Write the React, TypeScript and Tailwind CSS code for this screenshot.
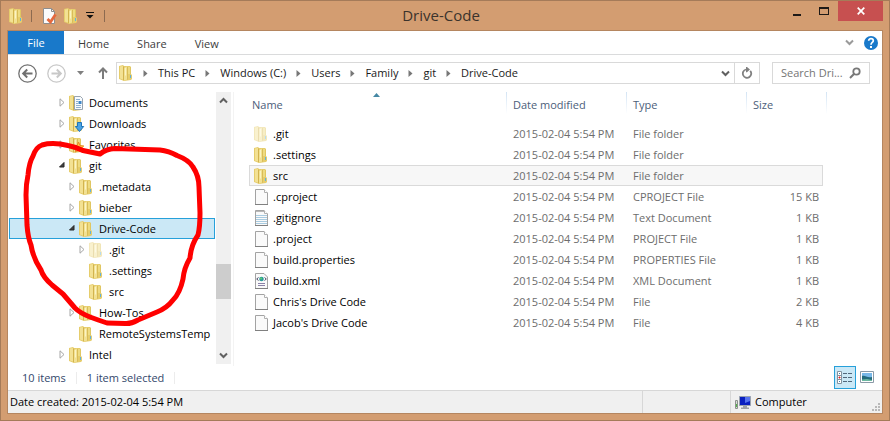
import React from "react";

type FileKind = "folder" | "hidden" | "blank" | "text" | "xml";

interface TreeNode {
  label: string;
  level: 0 | 1 | 2;
  state: "closed" | "open" | "leaf";
  icon: "folder" | "hidden" | "documents" | "downloads" | "favorites";
  selected?: boolean;
}

interface FileRow {
  name: string;
  kind: FileKind;
  type: string;
  size: string;
  hovered?: boolean;
}

const TREE: TreeNode[] = [
  { label: "Documents", level: 0, state: "closed", icon: "documents" },
  { label: "Downloads", level: 0, state: "closed", icon: "downloads" },
  { label: "Favorites", level: 0, state: "closed", icon: "favorites" },
  { label: "git", level: 0, state: "open", icon: "folder" },
  { label: ".metadata", level: 1, state: "closed", icon: "folder" },
  { label: "bieber", level: 1, state: "closed", icon: "folder" },
  { label: "Drive-Code", level: 1, state: "open", icon: "folder", selected: true },
  { label: ".git", level: 2, state: "closed", icon: "hidden" },
  { label: ".settings", level: 2, state: "leaf", icon: "folder" },
  { label: "src", level: 2, state: "leaf", icon: "folder" },
  { label: "How-Tos", level: 1, state: "closed", icon: "folder" },
  { label: "RemoteSystemsTemp", level: 1, state: "leaf", icon: "folder" },
  { label: "Intel", level: 0, state: "closed", icon: "folder" },
];

const MODIFIED = "2015-02-04 5:54 PM";

const FILES: FileRow[] = [
  { name: ".git", kind: "hidden", type: "File folder", size: "" },
  { name: ".settings", kind: "folder", type: "File folder", size: "" },
  { name: "src", kind: "folder", type: "File folder", size: "", hovered: true },
  { name: ".cproject", kind: "blank", type: "CPROJECT File", size: "15 KB" },
  { name: ".gitignore", kind: "text", type: "Text Document", size: "1 KB" },
  { name: ".project", kind: "blank", type: "PROJECT File", size: "1 KB" },
  { name: "build.properties", kind: "blank", type: "PROPERTIES File", size: "1 KB" },
  { name: "build.xml", kind: "xml", type: "XML Document", size: "1 KB" },
  { name: "Chris's Drive Code", kind: "blank", type: "File", size: "2 KB" },
  { name: "Jacob's Drive Code", kind: "blank", type: "File", size: "4 KB" },
];

const CRUMBS = ["This PC", "Windows (C:)", "Users", "Family", "git", "Drive-Code"];

const INDENT = ["pl-[50px]", "pl-[60px]", "pl-[70px]"];

function FolderIcon({ badge }: { badge?: React.ReactNode }) {
  return (
    <svg width="14" height="16" viewBox="0 0 14 16" className="shrink-0 overflow-visible" aria-hidden="true">
      <path d="M0 1 L4 0 L5 1 H11 L12 2 V9 L13 10 V14 L12 15 L5 16 L0 14 Z" fill="#e6cd6c" />
      <path d="M1 1.500 L4 1 V14.500 L1 13.500 Z" fill="#f3e193" />
      <path d="M4 1 L5 2 V15.500 L4 15 Z" fill="#d2b34e" />
      <path d="M5 3 L8 1.500 V14.500 L5 15.500 Z" fill="#f2e193" />
      <path d="M6 3 L7 2.500 V10 L6 11 Z" fill="#fbf3c4" />
      <path d="M8 2 H9 V14.500 L8 15 Z" fill="#d9bc58" />
      <path d="M9 2 H11 V9 H9 Z" fill="#eedb80" />
      <path d="M11 2 H12 V9 H11 Z" fill="#e0c662" />
      <path d="M11 10 H12 V13 H11 Z" fill="#62b1dc" />
      {badge}
    </svg>
  );
}

function TreeIcon({ icon }: { icon: TreeNode["icon"] }) {
  if (icon === "hidden") return <span className="opacity-45"><FolderIcon /></span>;
  if (icon === "documents")
    return (
      <FolderIcon
        badge={
          <g>
            <path d="M5.500 1.500 H11.500 L13.500 3.500 V14.500 H5.500 Z" fill="#f8fbfe" stroke="#98a4b0" />
            <path d="M7 4.500 H11 M7 6.500 H9 M7 8.500 H9 M7 10.500 H12 M7 12.500 H12" stroke="#8fb0d0" />
            <path d="M9.500 6 H12.500 V9 H9.500 Z" fill="#3f86c8" />
          </g>
        }
      />
    );
  if (icon === "downloads")
    return (
      <FolderIcon
        badge={<path d="M8.500 6.500 H12.500 V10.500 H14.700 L10.500 15.500 L6.300 10.500 H8.500 Z" fill="#4aa3e6" stroke="#1f74b8" />}
      />
    );
  if (icon === "favorites")
    return (
      <FolderIcon
        badge={
          <path
            d="M9.500 5 L11 8.500 L14.800 9 L12 11.500 L12.800 15 L9.500 13.200 L6.200 15 L7 11.500 L4.500 9 L8 8.500 Z"
            fill="#ffc63d"
            stroke="#e58a2b"
          />
        }
      />
    );
  return <FolderIcon />;
}

function FileIcon({ kind }: { kind: FileKind }) {
  if (kind === "folder") return <FolderIcon />;
  if (kind === "hidden") return <span className="opacity-45"><FolderIcon /></span>;
  return (
    <svg width="14" height="16" viewBox="0 0 14 16" className="shrink-0" aria-hidden="true">
      <path d="M1.500 0.500 H10 L13.500 4 V15.500 H1.500 Z" fill="#fafafa" stroke="#a3a3a3" />
      <path d="M1 15.500 H14" stroke="#808080" />
      {kind !== "xml" && <path d="M10.500 0.500 V3.500 H13.500" fill="#fff" stroke="#b0b0b0" />}
      {kind === "text" && (
        <g>
          <path d="M2.500 1.500 H10.500" stroke="#777" strokeDasharray="1 1" />
          <path d="M2 5.500 H13 M2 7.500 H13 M2 9.500 H13 M2 11.500 H13 M2 13.500 H13" stroke="#a9cbe0" />
        </g>
      )}
      {kind === "xml" && (
        <g>
          <circle cx="7.500" cy="6" r="2.300" fill="#2b9a9a" />
          <circle cx="7" cy="5.500" r="1" fill="#5ed06c" />
          <path d="M4.500 4.500 L2.700 6 L4.500 7.500 M10.500 4.500 L12.300 6 L10.500 7.500" fill="none" stroke="#4a4a68" />
          <path d="M4 10.500 H11 M4 12.500 H11" stroke="#8b82a8" />
        </g>
      )}
    </svg>
  );
}

function Expander({ state }: { state: TreeNode["state"] }) {
  return (
    <svg width="10" height="9" viewBox="0 0 10 9" className="shrink-0" aria-hidden="true">
      {state === "closed" && <path d="M1 0.800 L5 4.500 L1 8.200 Z" fill="#fff" stroke="#a6a6a6" />}
      {state === "open" && <path d="M5 1.500 V6 H0.500 Z" fill="#404040" stroke="#262626" />}
    </svg>
  );
}

function Chevron({ up, color = "#606060" }: { up?: boolean; color?: string }) {
  return (
    <svg width="9" height="7" viewBox="0 0 9 7" aria-hidden="true">
      <path d={up ? "M1 5.500 L4.500 2 L8 5.500" : "M1 1.500 L4.500 5 L8 1.500"} fill="none" stroke={color} strokeWidth="2" />
    </svg>
  );
}

function TitleBar() {
  return (
    <header className="grid h-[29px] grid-cols-[1fr_auto_1fr] items-start">
      <div className="flex h-[29px] items-center pl-2">
        <FolderIcon />
        <span className="ml-2 h-3 w-px bg-[#8c6a50]" />
        <button type="button" aria-label="Properties" className="ml-[10px]">
          <svg width="15" height="16" viewBox="0 0 15 16" aria-hidden="true">
            <path d="M1.500 0.500 H9.500 L12.500 3.500 V15.500 H1.500 Z" fill="#fbfbfb" stroke="#8e8e8e" />
            <path d="M9.500 0.500 V3.500 H12.500" fill="none" stroke="#8e8e8e" />
            <path d="M5.500 11 L8.500 14 L13.500 6.500" fill="none" stroke="#e5693e" strokeWidth="2.800" />
          </svg>
        </button>
        <button type="button" aria-label="New folder" className="ml-[7px]">
          <FolderIcon />
        </button>
        <button type="button" aria-label="Customize Quick Access Toolbar" className="ml-2">
          <svg width="8" height="7" viewBox="0 0 8 7" aria-hidden="true">
            <path d="M0 0 H8 V1 H0 Z M0.500 3 H7.500 L4 6.500 Z" fill="#111" />
          </svg>
        </button>
        <span className="ml-[10px] h-3 w-px bg-[#8c6a50]" />
      </div>
      <h1 className="pr-2 text-[15px] leading-[29px] text-[#3b332c]">Drive-Code</h1>
      <div className="flex justify-end pr-[6px]">
        <button type="button" aria-label="Minimize" className="flex h-[23px] w-[26px] items-center justify-center">
          <svg width="8" height="8" viewBox="0 0 8 8" aria-hidden="true">
            <path d="M0 5 H8 V7 H0 Z" fill="#1e1a17" />
          </svg>
        </button>
        <button type="button" aria-label="Maximize" className="flex h-5 w-[28px] items-center justify-center">
          <svg width="10" height="8" viewBox="0 0 10 8" aria-hidden="true">
            <path d="M0 0 H10 V8 H0 Z M1 2 V7 H9 V2 Z" fill="#1e1a17" fillRule="evenodd" />
          </svg>
        </button>
        <button type="button" aria-label="Close" className="flex h-5 w-[45px] items-center justify-center bg-[#c75050]">
          <svg width="8" height="8" viewBox="0 0 8 8" aria-hidden="true">
            <path d="M0.700 0.700 L7.300 7.300 M7.300 0.700 L0.700 7.300" stroke="#fff" strokeWidth="1.700" />
          </svg>
        </button>
      </div>
    </header>
  );
}

function Ribbon() {
  return (
    <div className="flex h-6 items-stretch border-b border-[#dadbdc]">
      <button type="button" className="w-14 bg-[#1979ca] text-center text-white">File</button>
      {["Home", "Share", "View"].map((tab) => (
        <button key={tab} type="button" className="px-[14px] pt-[2px] text-[#3c3c3c]">{tab}</button>
      ))}
      <div className="ml-auto flex items-center gap-[10px] pr-1">
        <button type="button" aria-label="Expand the Ribbon">
          <Chevron color="#9a9a9a" />
        </button>
        <button type="button" aria-label="Help">
          <svg width="14" height="14" viewBox="0 0 14 14" aria-hidden="true">
            <circle cx="7" cy="7" r="7" fill="#1979ca" />
            <path d="M4.700 4.800 C4.700 2 9.300 2 9.300 4.800 C9.300 6.500 7 6.500 7 8.800" fill="none" stroke="#fff" strokeWidth="1.700" />
            <path d="M6 10 H8 V12 H6 Z" fill="#fff" />
          </svg>
        </button>
      </div>
    </div>
  );
}

function RoundArrow({ forward }: { forward?: boolean }) {
  const color = forward ? "#c8c8c8" : "#707070";
  return (
    <svg width="19" height="19" viewBox="0 0 19 19" aria-hidden="true">
      <circle cx="9.500" cy="9.500" r="8.700" fill="#fff" stroke={color} strokeWidth="1.300" />
      <path
        d={forward ? "M4.500 9.500 H13.500 M9.800 5.500 L13.800 9.500 L9.800 13.500" : "M14.500 9.500 H5.500 M9.200 5.500 L5.200 9.500 L9.200 13.500"}
        fill="none"
        stroke={color}
        strokeWidth="2"
      />
    </svg>
  );
}

function NavBar() {
  return (
    <div className="mb-px flex h-9 items-center pl-[10px] pr-3">
      <button type="button" aria-label="Back"><RoundArrow /></button>
      <button type="button" aria-label="Forward" className="ml-[10px]"><RoundArrow forward /></button>
      <button type="button" aria-label="Recent locations" className="ml-[11px]">
        <svg width="7" height="4" viewBox="0 0 7 4" aria-hidden="true"><path d="M0 0 H7 L3.500 4 Z" fill="#808080" /></svg>
      </button>
      <button type="button" aria-label="Up" className="ml-[14px]">
        <svg width="10" height="12" viewBox="0 0 10 12" aria-hidden="true">
          <path d="M5 12 V1.500 M1 5.500 L5 1.500 L9 5.500" fill="none" stroke="#7c7c7c" strokeWidth="2" />
        </svg>
      </button>
      <nav aria-label="Address" className="ml-2 flex h-[22px] min-w-0 flex-1 items-center border border-[#d9d9d9] pl-[2px]">
        <FolderIcon />
        {CRUMBS.map((crumb) => (
          <React.Fragment key={crumb}>
            <svg width="5" height="7" viewBox="0 0 5 7" className="ml-[10px] mr-[10px] shrink-0" aria-hidden="true">
              <path d="M0.500 0 L4.500 3.500 L0.500 7 Z" fill="#777" />
            </svg>
            <a href="#" className="whitespace-nowrap text-[#1a1a1a]">{crumb}</a>
          </React.Fragment>
        ))}
        <button type="button" aria-label="Previous locations" className="ml-auto mr-1"><Chevron /></button>
        <button type="button" aria-label="Refresh" className="flex h-5 w-[25px] items-center justify-center border-l border-[#d9d9d9]">
          <svg width="12" height="12" viewBox="0 0 12 12" aria-hidden="true">
            <path d="M9.200 3.800 A4.200 4.200 0 1 1 5 2.500" fill="none" stroke="#808080" strokeWidth="1.800" />
            <path d="M5 0 H6 L9 2.500 L6 5.200 H5 Z" fill="#808080" />
          </svg>
        </button>
      </nav>
      <label className="ml-3 flex h-[22px] w-[98px] items-center border border-[#d9d9d9] pl-2 pr-2">
        <input
          type="text"
          aria-label="Search Drive-Code"
          placeholder="Search Dri..."
          className="w-full min-w-0 bg-transparent outline-none placeholder:text-[#757575]"
        />
        <svg width="12" height="12" viewBox="0 0 12 12" className="shrink-0" aria-hidden="true">
          <circle cx="7.500" cy="4.500" r="3.200" fill="none" stroke="#777" strokeWidth="1.800" />
          <path d="M5.200 6.800 L1 11" stroke="#777" strokeWidth="2" />
        </svg>
      </label>
    </div>
  );
}

function Sidebar() {
  return (
    <aside className="flex w-[226px] shrink-0 border-r border-[#f3f3f3]">
      <ul className="min-w-0 flex-1 overflow-hidden pl-px pr-px">
        {TREE.map((node) => (
          <li key={node.label + node.level}>
            <button
              type="button"
              className={`flex h-[21px] w-full items-center overflow-hidden whitespace-nowrap ${INDENT[node.level]} ${
                node.selected ? "bg-[#cbe8f6] outline-1 -outline-offset-1 outline-[#26a0da]" : ""
              }`}
            >
              <Expander state={node.state} />
              <TreeIcon icon={node.icon} />
              <span className="ml-[6px]">{node.label}</span>
            </button>
          </li>
        ))}
      </ul>
      <div className="mb-[2px] flex w-[15px] flex-col items-center bg-[#f0f0f0]">
        <button type="button" aria-label="Scroll up" className="flex h-[17px] items-center"><Chevron up /></button>
        <div className="flex w-full flex-1 flex-col">
          <div className="flex-[157]" />
          <div className="h-[35px] w-full bg-[#cdcdcd]" />
          <div className="flex-[49]" />
        </div>
        <button type="button" aria-label="Scroll down" className="flex h-[17px] items-center"><Chevron /></button>
      </div>
      <div className="w-[2px]" />
    </aside>
  );
}

function HeaderCell({ label, sorted, wide }: { label: string; sorted?: boolean; wide?: boolean }) {
  return (
    <th
      scope="col"
      colSpan={wide ? 2 : 1}
      className={`relative h-[31px] p-0 align-top text-left font-normal text-[#4c607a] ${sorted ? "pl-[3px]" : "pl-[6px]"}`}
    >
      <span className="block h-[26px] leading-[26px]">{label}</span>
      {sorted && (
        <svg width="7" height="4" viewBox="0 0 7 4" className="absolute left-1/2 top-px -ml-[5px]" aria-hidden="true">
          <path d="M0 4 H7 L3.500 0 Z" fill="#4588a4" />
        </svg>
      )}
      <span className="absolute right-0 top-0 h-[22px] w-px bg-linear-to-b from-[#d3e4f4] to-white" />
    </th>
  );
}

function FileList() {
  return (
    <main className="min-w-0 flex-1 overflow-hidden pl-[15px]">
      <table className="w-[578px] table-fixed border-separate border-spacing-0">
        <colgroup>
          <col className="w-[258px]" />
          <col className="w-[120px]" />
          <col className="w-[120px]" />
          <col className="w-[76px]" />
          <col className="w-1" />
        </colgroup>
        <thead>
          <tr>
            <HeaderCell label="Name" sorted />
            <HeaderCell label="Date modified" />
            <HeaderCell label="Type" />
            <HeaderCell label="Size" wide />
          </tr>
        </thead>
        <tbody>
          {FILES.map((file) => {
            const cell = `h-[21px] p-0 ${file.hovered ? "border-y border-[#dadada] bg-[#f7f7f7]" : ""}`;
            return (
              <tr key={file.name}>
                <td className={`${cell} ${file.hovered ? "border-l pl-1" : "pl-[5px]"}`}>
                  <span className="flex items-center gap-[5px]">
                    <FileIcon kind={file.kind} />
                    {file.name}
                  </span>
                </td>
                <td className={`${cell} pl-[6px] text-[#6d6d6d]`}>{MODIFIED}</td>
                <td className={`${cell} pl-[6px] text-[#6d6d6d]`}>{file.type}</td>
                <td className={`${cell} pr-1 text-right text-[#6d6d6d] ${file.hovered ? "border-r" : ""}`}>{file.size}</td>
              </tr>
            );
          })}
        </tbody>
      </table>
    </main>
  );
}

function DetailsBar() {
  return (
    <div className="flex h-6 items-start pl-[14px] pr-1 text-[#33476b]">
      <div className="flex h-6 items-center gap-[10px]">
        <span>10 items</span>
        <span className="h-3 w-px bg-[#ececec]" />
        <span>1 item selected</span>
        <span className="h-3 w-px bg-[#ececec]" />
      </div>
      <button
        type="button"
        aria-label="Details view"
        className="ml-auto flex h-[23px] w-[22px] items-center justify-center border border-[#26a0da] bg-[#cbe8f6]"
      >
        <svg width="16" height="13" viewBox="0 0 16 13" className="shrink-0" aria-hidden="true">
          <path d="M0.500 0.500 H4.500 V12.500 H0.500 Z M0.500 4.500 H4.500 M0.500 8.500 H4.500" fill="#fff" stroke="#8393a0" />
          <path d="M2 6 H3 V7 H2 Z" fill="#d22" stroke="#d22" />
          <path d="M2 2 H3 V3 H2 Z M2 10 H3 V11 H2 Z" fill="#3d82ad" />
          <path d="M6 2.500 H10 M11 2.500 H15 M6 6.500 H10 M11 6.500 H15 M6 10.500 H10 M11 10.500 H15" stroke="#52687c" />
        </svg>
      </button>
      <button type="button" aria-label="Large icons view" className="flex h-[22px] w-[22px] items-center justify-center">
        <svg width="14" height="12" viewBox="0 0 14 12" aria-hidden="true">
          <path d="M0.500 0.500 H13.500 V11.500 H0.500 Z" fill="#fff" stroke="#8b9aa7" />
          <path d="M2 2 H12 V10 H2 Z" fill="#79b8e8" />
          <path d="M2 5 C5 4 7 7 12 6 V10 H2 Z" fill="#246b7c" />
          <path d="M2 8.500 L7 8 L12 9 V10 H2 Z" fill="#6cb8a0" />
        </svg>
      </button>
    </div>
  );
}

function StatusBar() {
  return (
    <footer className="flex h-[23px] items-stretch border-t border-[#d7d7d7] bg-[#f0f0f0]">
      <span className="flex flex-1 items-center pl-[2px]">Date created: {MODIFIED}</span>
      <span className="w-[88px] border-l border-[#d7d7d7]" />
      <span className="flex w-[152px] items-center border-l border-[#d7d7d7] pl-1">
        <svg width="16" height="15" viewBox="0 0 16 15" aria-hidden="true">
          <path d="M0.500 5.500 H2.500 V13.500 H0.500 Z" fill="#d8dcd8" stroke="#8c928c" />
          <path d="M1 9 H2 V12 H1 Z" fill="#53b34a" />
          <path d="M4.500 1.500 H15.500 V10.500 H4.500 Z" fill="#0a1fc0" stroke="#9aa2ae" />
          <path d="M10 2 H15 V6 L10 8 Z" fill="#5672ee" />
          <path d="M8 11 H12 V12.500 H14 V14 H6 V12.500 H8 Z" fill="#9ea2a8" />
        </svg>
        <span className="ml-1">Computer</span>
        <svg width="9" height="9" viewBox="0 0 9 9" className="mb-px ml-auto mr-px self-end" aria-hidden="true">
          <path d="M6 0 H8 V2 H6 Z M3 3 H5 V5 H3 Z M6 3 H8 V5 H6 Z M0 6 H2 V8 H0 Z M3 6 H5 V8 H3 Z M6 6 H8 V8 H6 Z" fill="#b8b8b8" />
        </svg>
      </span>
    </footer>
  );
}

function RedCircle() {
  return (
    <svg width="220" height="340" viewBox="0 0 220 340" className="pointer-events-none absolute -left-px -top-px" aria-hidden="true">
      <path
        d="M42 145 Q53 142 68 145.500 Q76 147 83 150.500 L100 154 Q106 149 115 148.500 L160 150 Q169 151 177 155.500 Q189 160 193 167 Q199 176 199 187 L200 213 Q200 227 198 235 Q191 245 190 258 Q184 268 183 279 Q180 293 173 300 Q167 308 157 312 L138 320 Q131 324 125 323.500 L107 323 Q98 320 90 317 Q80 313 75 308 L63 294 L52 285 Q43 277 41 270 Q33 258 31 245 Q28 238 27 225 L26 195 Q26 184 28 175 Q29 163 33 156 Q36 147 42 145 Z"
        fill="none"
        stroke="#ff0000"
        strokeWidth="5"
        strokeLinejoin="round"
      />
    </svg>
  );
}

export default function App() {
  return (
    <div className="relative flex min-h-screen flex-col border border-[#a57b59] bg-[#d39d71] font-['Open_Sans','Noto_Sans',sans-serif] text-[11px] leading-4 text-black">
      <TitleBar />
      <div className="mx-[6px] mb-[6px] flex flex-1 flex-col border border-[#b58660] bg-white">
        <Ribbon />
        <NavBar />
        <div className="flex flex-1">
          <Sidebar />
          <FileList />
        </div>
        <DetailsBar />
        <StatusBar />
      </div>
      <RedCircle />
    </div>
  );
}
